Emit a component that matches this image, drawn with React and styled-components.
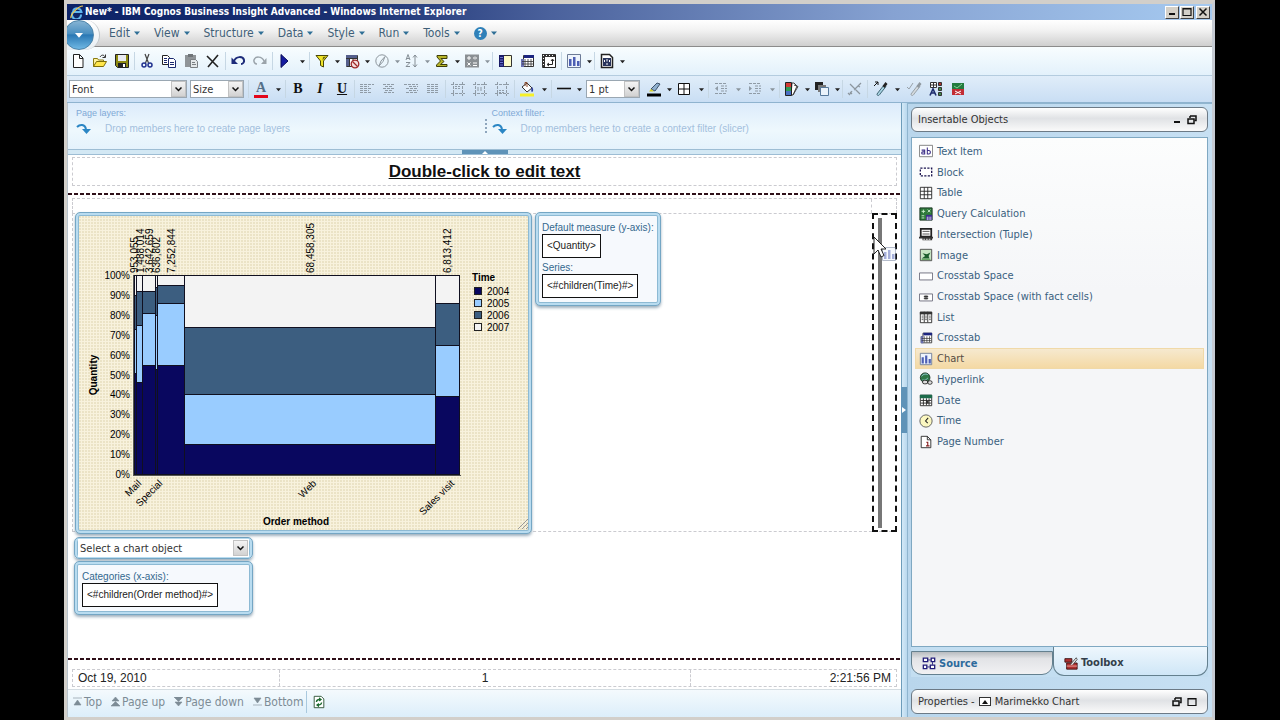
import React from "react";
import styled, { createGlobalStyle, css } from "styled-components";

const ui = `"DejaVu Sans Condensed", "Noto Sans", sans-serif`;
const arial = `"Liberation Sans", Arial, sans-serif`;

const GlobalStyle = createGlobalStyle`
  * {
    box-sizing: border-box;
  }
  body {
    margin: 0;
    background: #000;
    font-family: ${ui};
    font-size: 11px;
  }
  button {
    border: 0;
    padding: 0;
    margin: 0;
    background: none;
    font: inherit;
    color: inherit;
  }
  ul {
    list-style: none;
    margin: 0;
    padding: 0;
  }
  svg {
    display: block;
    flex: none;
  }
`;

/* ---------- icons ---------- */

const Glyph = ({ size = 16, children }) => (
  <svg width={size} height={size} viewBox="0 0 16 16" fill="none" aria-hidden="true">
    {children}
  </svg>
);

const alignLines = (rows) =>
  rows.map(([x, w], i) => (
    <path key={i} d={`M${x} ${3.5 + i * 2}h${w}`} stroke="#8f9ba6" strokeDasharray="3 1" />
  ));

const frameLines = (y) => (
  <>
    <path d="M3.5 1v14M12.5 1v14M1 3.5h14M1 12.5h14" stroke="#8f9ba6" strokeDasharray="3 1" />
    <path d={`M5 ${y}h6M5 ${y + 2}h6`} stroke="#8f9ba6" strokeDasharray="2 1" />
  </>
);

const icons = {
  new: <path d="M3.5 1.5h6l3.5 3.5v9.5h-9.5zM9.5 1.5v4h3.5" fill="#fff" stroke="#222" />,
  open: (
    <>
      <path d="M1.5 13.5v-8h4l1 1.5h5v2" fill="#fff3a0" stroke="#8a7a10" />
      <path d="M1.5 13.5l3-5h10l-3 5z" fill="#ffe64a" stroke="#7d6d08" />
      <path d="M8 4c1.5-2.5 4-2.5 5 0M13.5 1.5v3h-3" stroke="#333" />
    </>
  ),
  save: (
    <>
      <path d="M1.5 1.5h13v13h-11l-2-2z" fill="#8e8b12" stroke="#222" />
      <path d="M4 2h8v6H4z" fill="#e9ebf2" />
      <path d="M4 10h8v4H4z" fill="#222" />
      <path d="M9 11h2v3H9z" fill="#fff" />
    </>
  ),
  cut: (
    <>
      <path d="M6 1l3.5 9M10 1l-3.5 9" stroke="#444" strokeWidth="1.2" />
      <circle cx="5" cy="12" r="2" stroke="#20318f" strokeWidth="1.5" />
      <circle cx="11" cy="12" r="2" stroke="#20318f" strokeWidth="1.5" />
    </>
  ),
  copy: (
    <>
      <path d="M1.5 2.5h5l2 2v7h-7z" fill="#fff" stroke="#222" />
      <path d="M7.5 5.5h5l2 2v7h-7z" fill="#fff" stroke="#1c2a70" />
      <path d="M3 5.5h3M3 7.5h3M3 9.5h3M9 9.5h4M9 11.5h4" stroke="#1c2a70" />
    </>
  ),
  paste: (
    <>
      <path d="M2 2h11v12H2z" fill="#8f9498" />
      <path d="M5 1h5v3H5z" fill="#6f7478" />
      <path d="M7.5 6.5h5l2 2v6h-7z" fill="#e4e8ea" stroke="#7a7f83" />
      <path d="M9 9.5h3M9 11.5h4" stroke="#7a7f83" />
    </>
  ),
  remove: <path d="M2 3l11 11M13 2L3 14" stroke="#222" strokeWidth="1.6" />,
  undo: (
    <>
      <path d="M4 8c2-5 9-5 10-1 .5 2-1 4-3 4" stroke="#1d2b7a" strokeWidth="2" />
      <path d="M1.5 4.5v6.500h6.500z" fill="#1d2b7a" />
    </>
  ),
  redo: (
    <>
      <path d="M12 8C10 3 3 3 2 7c-.5 2 1 4 3 4" stroke="#9aa3aa" strokeWidth="1.5" />
      <path d="M14.5 5v6H9z" fill="#9aa3aa" />
    </>
  ),
  run: <path d="M4 1.5l7 6.5-7 6.5z" fill="#151ba0" stroke="#0a0d58" />,
  filter: (
    <>
      <path d="M2 2.5h12l-4.5 5.5v6l-3-1.500V8z" fill="#f0e428" stroke="#4a4708" />
      <path d="M9 4l3-.5-3.500 4z" fill="#6b6810" />
    </>
  ),
  suppress: (
    <>
      <path d="M2.5 2.5h11v11h-11zM2.5 5.5h11M5.5 2.5v11M9 5v4" fill="#fff" stroke="#333" />
      <path d="M2 2h11v3H2zM2 6h3v7H2z" fill="#555f8c" />
      <circle cx="11" cy="11" r="3.8" fill="#f4dcdc" stroke="#a02828" strokeWidth="1.3" />
      <path d="M8.5 8.5l5 5" stroke="#a02828" strokeWidth="1.3" />
    </>
  ),
  explore: (
    <>
      <circle cx="8" cy="8" r="6.2" stroke="#8e979e" />
      <path d="M11 3.5L7 8l-2 5 4-4.5z" stroke="#8e979e" />
    </>
  ),
  sort: (
    <>
      <path d="M2 7l2-5.5L6 7M2.5 5.5h3M2 9.5h4l-4 4h4" stroke="#858e95" />
      <path d="M11 2v12M9 4.5L11 2l2 2.5M9 11.5l2 2.5 2-2.5" stroke="#858e95" />
    </>
  ),
  sum: <path d="M3 2.5h10v3H7l3 3-3.5 3H13v2H2.5V12L6.500 8 3 4z" fill="#b7b52a" stroke="#3f3e08" />,
  calc: (
    <>
      <path d="M1 1.5h14v13H1z" fill="#8a8f93" />
      <path
        d="M3 5h4M5 3v4M9 5h4M3.5 9.5l3 3M6.5 9.5l-3 3M9 10h4M9 12.5h4M11 3v.5M11 6.5v.5"
        stroke="#fff"
      />
    </>
  ),
  panel: (
    <>
      <path d="M2.5 2.5h12v11h-12z" fill="#fdfbc8" stroke="#333" />
      <path d="M2 2h5v12H2z" fill="#1a1c66" />
      <path d="M3 4.5h3M3 7h3M3 9.5h3M3 12h3" stroke="#6c72d0" />
    </>
  ),
  crosstab: (
    <>
      <path d="M4.5 2.5h10v11h-12v-7h2z" fill="#fff" stroke="#333" />
      <path d="M5 2h10v3H5z" fill="#1c2580" />
      <path d="M2 6h3v8H2z" fill="#6a70b0" />
      <path d="M3 8.5h11M3 11h11M6 6v7M9 6v7M12 6v7" stroke="#333" strokeWidth=".8" />
    </>
  ),
  swap: (
    <>
      <path d="M1.5 1.5h13v13h-13z" fill="#fff" stroke="#222" />
      <path d="M1 1h13v3H1zM1 1h3v13H1z" fill="#333" />
      <path d="M2 2.5h11M2.5 5v8" stroke="#fff" strokeDasharray="1 2" />
      <path d="M11.5 6.5v5h-5M10 8l1.5-2L13 8M8 10l-2 1.5L8 13" stroke="#222" />
    </>
  ),
  chart: (
    <>
      <path d="M1.5 1.5h13v13h-13z" fill="#eef4fc" stroke="#6c7a96" />
      <path d="M3 6h2.5v7H3zM7 4h2.5v9H7zM11 8h2.5v5H11z" fill="#4d5fb4" />
    </>
  ),
  template: (
    <>
      <path d="M2.5 1.5h8l3 3v10h-11z" fill="#fff" stroke="#222" strokeWidth="1.5" />
      <path d="M4 5h8v8H4z" fill="#29345c" />
      <path d="M5.5 7v2M8 6v2.5M8 10v2M10.5 7v2" stroke="#fff" />
    </>
  ),
  fill: (
    <>
      <path d="M3 6l5-4 5 5-5 4z" fill="#fff" stroke="#333" />
      <path d="M6 5V1.5h2V6" stroke="#8d4b2a" />
      <path d="M13 6c2 2 1 5 0 5s-1-3 0-5z" fill="#2a3a9c" />
      <path d="M1 12.5h14v3H1z" fill="#f6f02a" />
    </>
  ),
  line: <path d="M1 7.5h14" stroke="#111" strokeWidth="1.6" />,
  pen: (
    <>
      <path d="M5 8l6-6 3 1-5 7z" fill="#8fb0cf" stroke="#3c526b" />
      <path d="M3 10.500l2-2.500 3 2.500z" fill="#d8d020" />
      <path d="M1 12.5h14v3H1z" fill="#000" />
    </>
  ),
  borders: <path d="M2.5 2.5h11v11h-11zM8 2.5v11M2.5 8h11" fill="#fff" stroke="#111" />,
  outdent: (
    <>
      <path d="M2 2.5h12M8 5h6M8 7.5h6M8 10h6M2 12.5h12" stroke="#8f9ba6" strokeDasharray="3 1" />
      <path d="M5 5L2 7.5 5 10z" fill="#8f9ba6" />
    </>
  ),
  indent: (
    <>
      <path d="M2 2.5h12M8 5h6M8 7.5h6M8 10h6M2 12.5h12" stroke="#8f9ba6" strokeDasharray="3 1" />
      <path d="M2 5l3 2.5L2 10z" fill="#8f9ba6" />
    </>
  ),
  palette: (
    <>
      <path d="M8 2h2l3 3-4 9H7zM10 4l4 1.5-5 8.5" fill="#fff" stroke="#444" />
      <path d="M1.5 1.5h6v13h-6z" fill="#4a70c4" stroke="#222" />
      <path d="M2 2h5v4H2z" fill="#d33a34" />
      <path d="M2 6h5v4H2z" fill="#2f9a56" />
    </>
  ),
  layers: (
    <>
      <path d="M1 1h8v8H1z" fill="#222" />
      <path d="M4 4h8v7H4z" fill="#777" />
      <path d="M6.5 6.5h8v8h-8z" fill="#eaf3fb" stroke="#56789a" />
    </>
  ),
  clear: (
    <path d="M14 2L7 9M3 3l10 10M3 11l2 2M1 12l2 2M11 5l2 1M5 10l-2 3" stroke="#8c969e" strokeWidth="1.2" />
  ),
  pick: (
    <>
      <path d="M2 5l4-4M3 1h3v3" stroke="#111" />
      <path d="M5 13l7-9 2 1.5L8 13c-1 2-3 2-3 0z" fill="#a8d4e4" stroke="#3f6472" />
      <path d="M10.5 5l3-4 2 2-3 4z" fill="#222" />
    </>
  ),
  apply: (
    <>
      <path d="M1 6l2 2 4-6" stroke="#98a1a8" />
      <path d="M5 13l7-9 2 1.5L8 13c-1 2-3 2-3 0z" fill="#d4dade" stroke="#98a1a8" />
      <path d="M10.5 5l3-4 2 2-3 4z" fill="#8f989f" />
    </>
  ),
  styles: (
    <>
      <path d="M2.5 1.5h6v5h-6zM5.5 1.5v5M2.5 4h6" fill="#fff" stroke="#333" />
      <path d="M10.5 1.5h3v3h-3z" fill="#b0302c" stroke="#333" />
      <path d="M10.5 6.5h3v3h-3zM10.5 11.5h3v3h-3z" fill="#3f8c4a" stroke="#333" />
      <path d="M2 14.5L5 8l3 6.5M3 12h4" stroke="#1e2d6e" strokeWidth="1.6" />
    </>
  ),
  conditional: (
    <>
      <path d="M2 2h12v6H2z" fill="#237a3e" />
      <path d="M2 8h12v6H2z" fill="#c22c34" />
      <path d="M4 5l3 2 5-4" stroke="#7fd492" />
      <path d="M5 10l6 3M11 10l-6 3" stroke="#fff" />
    </>
  ),
  alignLeft: alignLines([[1, 14], [1, 9], [1, 12], [1, 9], [1, 12]]),
  alignCenter: alignLines([[2, 12], [4, 8], [2, 12], [4, 8], [3, 10]]),
  alignRight: alignLines([[1, 14], [6, 9], [3, 12], [6, 9], [3, 12]]),
  justify: alignLines([[2, 12], [2, 12], [2, 12], [2, 12], [2, 12]]),
  top: frameLines(5.5),
  middle: frameLines(7),
  bottom: frameLines(9.5),

  text: (
    <>
      <path d="M.5 1.5h15v13H.5z" fill="#fff" stroke="#777" />
      <path
        d="M3 7h3.500v4.500H4.300a1.200 1.200 0 010-2.500H6M9.500 4v7.500h1.700c2.400 0 2.400-4 0-4H9.500"
        stroke="#3a2c86"
        strokeWidth="1.2"
      />
    </>
  ),
  block: (
    <path d="M1.5 3.5h13v9h-13z" fill="#fff" stroke="#19124e" strokeWidth="1.5" strokeDasharray="2.5 1.5" />
  ),
  table: (
    <path d="M1.500 1.500h13v13h-13zM6 1.500v13M10 1.500v13M1.500 6h13M1.500 10h13" fill="#fff" stroke="#222" />
  ),
  query: (
    <>
      <path d="M1 1h14v14H1z" fill="#2f7a3c" stroke="#16301b" />
      <path d="M3 5h4M5 3v4M10 3l3 3M13 3l-3 3M3 10h3M3 12.5h3" stroke="#d4f2d4" />
      <path d="M8 9h7v6H8z" fill="#3c2b8e" />
      <path d="M9.5 11v4M11.500 11v4M13.500 11v4" stroke="#fff" strokeWidth=".8" />
    </>
  ),
  tuple: (
    <>
      <path d="M2 2h12v9H2z" fill="#fff" stroke="#222" strokeWidth="2" />
      <path d="M4 5h8M4 8h8" stroke="#444" />
      <path d="M0 11h16v2H0zM4 13h11v2H4z" fill="#333" />
      <path d="M5 14h9" stroke="#fff" strokeDasharray="2 1" />
    </>
  ),
  image: (
    <>
      <path d="M1.5 1.5h13v13h-13z" fill="#c8e4c4" stroke="#444" />
      <path d="M3 12l4-3-3-3 5 1 4-2-2 4 1 3z" fill="#1c5c2c" />
      <path d="M3 13h10" stroke="#4f9a4a" />
    </>
  ),
  space: <path d="M.5 4.5h15v8H.5z" fill="#fff" stroke="#667" />,
  spaceFact: (
    <>
      <path d="M.5 4.5h15v8H.5z" fill="#fff" stroke="#667" />
      <path d="M7 6v5M9 6v5M5.500 7.500h5M5.500 9.500h5" stroke="#222" />
    </>
  ),
  list: (
    <>
      <path d="M1.5 2.5h13v12h-13zM6 2v12M10 2v12" fill="#fff" stroke="#222" />
      <path d="M1 2h14v3H1z" fill="#333" />
      <path d="M3 7h2M3 9h2M3 11h2M7 7h2M7 9h2M7 11h2M11.500 7h2M11.500 9h2M11.500 11h2" stroke="#555" />
    </>
  ),
  hyperlink: (
    <>
      <circle cx="7" cy="6.5" r="5.5" fill="#2f7848" stroke="#1c3426" />
      <path d="M3 5c2-3 5-3 7-2M4 9c2 1 4 0 6-2" stroke="#a4d8e8" />
      <path
        d="M4 11.5a2 2 0 012-2h2a2 2 0 010 4H6a2 2 0 01-2-2zM10 12a2 2 0 012-2h1a2 2 0 010 4h-1a2 2 0 01-2-2z"
        fill="#ddd"
        stroke="#222"
      />
    </>
  ),
  date: (
    <>
      <path d="M1.5 2.5h13v12h-13zM5 6v8M8.5 6v8M11.5 6v8M2 8.5h12M2 11.5h12" fill="#fff" stroke="#222" />
      <path d="M1 2h14v4H1z" fill="#1c6a4a" />
      <path d="M8 9h3v3H8z" fill="#333" />
    </>
  ),
  time: (
    <>
      <circle cx="8" cy="8" r="7" fill="#fbf7c0" stroke="#555" />
      <path d="M10.5 4.5L7.500 8l2.500 2.500" stroke="#222" strokeWidth="1.2" />
    </>
  ),
  pageNumber: (
    <>
      <path d="M2.500 1.500h7l4 4v9h-11zM9.500 1.500v4h4" fill="#fff" stroke="#222" />
      <path d="M8.500 8.500h1.500v4M8 12.500h4" stroke="#8a2424" strokeWidth="1.3" />
    </>
  ),
  source: (
    <>
      <path
        d="M1.500 2.500h5v4h-5zM10.500 2.500h4v4h-4zM1.500 10.500h4v4h-4zM9.500 10.500h5v4h-5z"
        fill="#fff"
        stroke="#221c7a"
        strokeWidth="1.5"
      />
      <path d="M7 4.500h3M6 12.500h3M12 7v3" stroke="#221c7a" />
    </>
  ),
  toolbox: (
    <>
      <path d="M1 3h8v4H1zM3 8h12v7H3z" fill="#b03030" stroke="#3c1010" />
      <path d="M7 10l7-8 1 2-5 6" fill="#eee" stroke="#444" />
      <path d="M3 11.500h12" stroke="#f2b0a8" />
    </>
  ),
  refresh: (
    <>
      <path d="M2.500 1.500h8l3 3v10h-11z" fill="#fff" stroke="#234a2c" />
      <path d="M5 8a3 3 0 015-2M11 8.500a3 3 0 01-5 2" stroke="#1d6a30" strokeWidth="1.6" />
      <path d="M8 2.500v5l3.500-2.500zM8 14V9l-3.500 2.500z" fill="#1d6a30" />
    </>
  ),
};

const CaretDown = ({ color = "#222", size = 5 }) => (
  <svg width={size} height={size} viewBox="0 0 6 6" aria-hidden="true">
    <path d="M0 1.5h6L3 5z" fill={color} />
  </svg>
);

const RestoreIcon = () => (
  <svg width="10" height="10" viewBox="0 0 10 10" fill="none" aria-hidden="true">
    <path d="M3 1h6v4.5H7.5M3 1v2" stroke="#111" strokeWidth="1.5" />
    <path d="M1 4h6v4.5H1z" stroke="#111" strokeWidth="1.5" />
  </svg>
);

const MinimizeIcon = () => (
  <svg width="10" height="10" viewBox="0 0 10 10" aria-hidden="true">
    <path d="M2 6h6v2H2z" fill="#111" />
  </svg>
);

const MaximizeIcon = () => (
  <svg width="10" height="10" viewBox="0 0 10 10" fill="none" aria-hidden="true">
    <path d="M1 1.5h8v7H1zM1 2h8" stroke="#111" strokeWidth="1.2" />
  </svg>
);

const CloseIcon = () => (
  <svg width="10" height="10" viewBox="0 0 10 10" aria-hidden="true">
    <path d="M1.5 1.5l7 7M8.5 1.5l-7 7" stroke="#111" strokeWidth="1.5" />
  </svg>
);

/* ---------- window chrome ---------- */

const Screen = styled.div`
  min-height: 100vh;
  padding: 0 65px 0 64px;
  display: flex;
`;

const Window = styled.div`
  flex: 1;
  min-width: 0;
  display: flex;
  flex-direction: column;
  border: solid #d2cfca;
  border-width: 4px 3px 3px 3px;
  border-right-color: #c6cbd3;
  background: #c3def1;
`;

const TitleBar = styled.header`
  height: 16px;
  padding: 0 2px 0 3px;
  display: flex;
  align-items: center;
  gap: 1px;
  background: linear-gradient(90deg, #0d2367 0%, #1b3172 25%, #4a619c 42%, #86a2d2 72%, #a6caf0 100%);
  color: #fff;
`;

const WindowTitle = styled.h1`
  flex: 1;
  margin: 0;
  font: bold 10px/16px ${ui};
  white-space: nowrap;
`;

const WindowButton = styled.button`
  width: 14px;
  height: 13px;
  display: grid;
  place-items: center;
  background: #d4d0c8;
  border: 1px solid;
  border-color: #fff #404040 #404040 #fff;
  margin-left: ${({ $apart }) => ($apart ? 1 : 0)}px;
`;

const MenuBar = styled.nav`
  position: relative;
  height: 27px;
  padding-left: 42px;
  display: flex;
  align-items: center;
  gap: 14px;
  background: linear-gradient(#fff, #f2f2f2 40%, #cfcfcf);
  border-bottom: 1px solid #8b8b8b;
`;

const AppArc = styled.div`
  position: absolute;
  left: 0;
  top: 0;
  width: 33px;
  height: 30px;
  overflow: hidden;
  border-radius: 0 16px 16px 0;
  background: linear-gradient(#fff, #e8eef2);
  border-right: 1px solid #c0c6ca;
`;

const AppButton = styled.button`
  width: 30px;
  height: 30px;
  margin-left: -3px;
  border-radius: 50%;
  display: grid;
  place-items: center;
  background: linear-gradient(#86b4d4, #4a8fc0 45%, #2a78b4 50%, #6fb8e4);
  border: 1px solid #4c83a8;
`;

const MenuButton = styled.button`
  display: flex;
  align-items: center;
  gap: 4px;
  color: #3f5f78;
  font-size: 12px;
`;

const HelpBadge = styled.span`
  width: 13px;
  height: 13px;
  border-radius: 50%;
  display: grid;
  place-items: center;
  background: #2f80b8;
  color: #fff;
  font-size: 10px;
  font-weight: bold;
`;

const ToolBar = styled.div`
  height: ${({ $dense }) => ($dense ? 27 : 29)}px;
  display: flex;
  align-items: center;
  background: ${({ $dense }) =>
    $dense ? "linear-gradient(#e0edf9, #c9def4)" : "linear-gradient(#f8fdff, #e3f1fb)"};
  border-bottom: 1px solid ${({ $dense }) => ($dense ? "#8fb3cf" : "#b4ccdf")};
`;

const Separator = styled.span`
  width: 1px;
  height: 18px;
  margin: 0 1px;
  background: #c6d7e4;
`;

const ToolButton = styled.button`
  height: 22px;
  display: flex;
  align-items: center;
`;

const ToolFace = styled.span`
  width: 22px;
  height: 20px;
  display: grid;
  place-items: center;
  font-family: "Liberation Serif", serif;
  font-size: 14px;
  font-weight: bold;
  line-height: 14px;
  color: #111;
  ${({ $face }) => $face === "I" && "font-style: italic;"}
  ${({ $face }) => $face === "U" && "text-decoration: underline;"}
  ${({ $face }) =>
    $face === "A" &&
    css`
      place-content: center;
      color: #55708a;
      &::after {
        content: "";
        width: 14px;
        height: 3px;
        background: #e3061b;
      }
    `}
`;

const ToolCaret = styled.span`
  width: ${({ $wide }) => ($wide ? 12 : 8)}px;
  display: grid;
  place-items: center;
`;

const SelectBox = styled.label`
  position: relative;
  display: flex;
  width: ${({ $width }) => $width};
  margin: ${({ $margin }) => $margin || 0};

  select {
    appearance: none;
    flex: 1;
    min-width: 0;
    height: 18px;
    padding: 0 18px 0 2px;
    border: ${({ $plain }) => ($plain ? "0" : "1px solid #9aa7b2")};
    border-radius: 0;
    background: #fff;
    color: #333;
    font: 11px ${ui};
  }
`;

const SelectArrow = styled.span`
  position: absolute;
  right: 1px;
  top: 1px;
  width: 15px;
  height: 16px;
  display: grid;
  place-items: center;
  pointer-events: none;
  background: linear-gradient(#f4f4f4, #d2d2d2);
  border: 1px solid #c2c2c2;
`;

const Select = ({ label, children, ...box }) => (
  <SelectBox {...box}>
    <select aria-label={label}>
      <option>{children}</option>
    </select>
    <SelectArrow>
      <svg width="7" height="5" viewBox="0 0 7 5" fill="none" aria-hidden="true">
        <path d="M.5.5l3 3 3-3" stroke="#111" strokeWidth="1.5" />
      </svg>
    </SelectArrow>
  </SelectBox>
);

const Tool = ({ name, face, caret, off }) => (
  <ToolButton type="button" aria-label={name}>
    <ToolFace $face={face}>{face || <Glyph>{icons[name]}</Glyph>}</ToolFace>
    {caret && (
      <ToolCaret $wide={caret === "wide"}>
        <CaretDown color={off ? "#8a949c" : "#222"} />
      </ToolCaret>
    )}
  </ToolButton>
);

/* ---------- work area ---------- */

const Workspace = styled.main`
  flex: 1;
  display: flex;
`;

const Editor = styled.section`
  flex: 1;
  min-width: 0;
  display: flex;
  flex-direction: column;
  background: #fff;
  border-left: 1px solid #b9c4cd;
`;

const DropZones = styled.div`
  height: 46px;
  display: grid;
  grid-template-columns: 1fr 1fr;
  background: linear-gradient(#dcebfb, #eef8fd 60%, #e4f2fc);
`;

const DropZone = styled.div`
  padding: 5px 0 0 8px;
  color: #7fa9d6;
  font: 9px/10px ${arial};

  & + & {
    padding-left: 7px;
    background: repeating-linear-gradient(#8ea6bd 0 2px, transparent 2px 4px) 0 16px / 2px 14px no-repeat;
  }
`;

const DropHint = styled.p`
  margin: 1px 0 0;
  display: flex;
  align-items: center;
  gap: 14px;
  color: #a3c0dd;
  font-size: 10px;
  line-height: 20px;
`;

const Collapser = styled.div`
  height: 6px;
  display: flex;
  justify-content: center;
  background: #d3e8f4;
  border: solid #9dbdd4;
  border-width: 1px 0;
`;

const CollapseHandle = styled.button`
  width: 46px;
  display: grid;
  place-items: center;
  background: #5f93b8;
`;

const dashed = "1px dashed #cbcbd0";

const PageTitle = styled.h2`
  height: 29px;
  margin: 2px 4px 7px;
  border: ${dashed};
  text-align: center;
  font: bold 17px/27px ${arial};
  text-decoration: underline;
  color: #111;
`;

const SectionRule = styled.div`
  height: 2px;
  background: repeating-linear-gradient(90deg, #2e0f18 0 4px, #fff 4px 6px);
`;

const PageBody = styled.div`
  flex: 1;
  padding: 3px 4px 0;
`;

const SlotRow = styled.div`
  height: 15px;
  display: grid;
  grid-template-columns: 1fr 25px;
  border: ${dashed};
  border-bottom: 0;

  span + span {
    border-left: ${dashed};
  }
`;

const ContentRow = styled.div`
  display: flex;
  align-items: flex-start;
  border: ${dashed};
  border-right: 0;
`;

const Spacer = styled.div`
  flex: 1;
`;

const DropColumn = styled.div`
  position: relative;
  align-self: stretch;
  width: 25px;
  margin: -1px 0;
  padding: 3px 3px 2px 4px;
  border: 2px dashed #111;

  &::before {
    content: "";
    display: block;
    width: 4px;
    height: 100%;
    background: #777;
  }
`;

const DragPointer = styled.div`
  position: absolute;
  left: -1px;
  top: 20px;
`;

const card = css`
  border: 1px solid #74a6c4;
  border-radius: 5px;
  box-shadow: inset 0 0 0 2px #b9dcf0, inset 0 0 0 3px #8dbad4, 0 2px 3px rgba(40, 80, 110, 0.45);
`;

const ChartCard = styled.div`
  ${card}
  width: 457px;
  margin: -2px 3px -3px 2px;
  padding: 2px;
  background: radial-gradient(circle at 1px 1px, #ebe3c6 1px, transparent 1px) 0 0 / 3px 3px #f8f2dd;
`;

const FieldCard = styled.div`
  ${card}
  width: ${({ $width }) => $width}px;
  margin-top: ${({ $top }) => $top}px;
  padding: 9px 0 7px ${({ $inset }) => $inset}px;
  background: #f6f9fd;
  font: 10px/12px ${arial};
  color: #33688e;
`;

const Field = styled.div`
  & + & {
    margin-top: 4px;
  }
`;

const FieldValue = styled.div`
  width: fit-content;
  height: 24px;
  padding: 0 4px;
  border: 1px solid #111;
  background: #fff;
  color: #222;
  line-height: 22px;
`;

const ControlStack = styled.div`
  width: 179px;
  margin: 5px 0 0 2px;
`;

const SelectCard = styled.div`
  ${card}
  height: 22px;
  padding: 1px 3px;
`;

const PageFooter = styled.div`
  height: 18px;
  margin: 9px 4px 2px;
  display: grid;
  grid-template-columns: 1fr 2fr 1fr;
  border: ${dashed};
  font: 12px/16px ${arial};
  color: #222;
`;

const FooterCell = styled.div`
  padding: 0 5px;
  text-align: ${({ $align }) => $align};

  & + & {
    border-left: ${dashed};
  }
`;

const PageNav = styled.nav`
  height: 28px;
  padding: 0 0 4px 5px;
  display: flex;
  align-items: center;
  gap: 9px;
  background: linear-gradient(#f4fafd, #dceefa);
  border-top: 1px solid #d5dde2;
  color: #7d8c96;
  font-size: 12px;
`;

const NavButton = styled.button`
  display: flex;
  align-items: center;
  gap: 2px;
`;

const NavEnd = styled.div`
  margin-left: -6px;
  padding-left: 5px;
  border-left: 1px solid #a9c9de;
`;

const Splitter = styled.div`
  width: 6px;
  display: flex;
  flex-direction: column;
  justify-content: center;
  background: linear-gradient(90deg, #6d9cba 1px, #d4e9f7 1px, #b9d8ee);
`;

const SplitHandle = styled.button`
  height: 46px;
  background: #5f93b8;
`;

/* ---------- right panel ---------- */

const SidePanel = styled.aside`
  width: 305px;
  padding: 3px 4px 3px 3px;
  display: flex;
  flex-direction: column;
  background: linear-gradient(90deg, #b9d6ec, #c7e0f3);
  border-left: 1px solid #8fb5cf;
  border-top: 1px solid #8fb5cf;
`;

const PanelHeader = styled.div`
  height: 25px;
  padding: 0 10px 0 6px;
  display: flex;
  align-items: center;
  gap: 5px;
  border: 1px solid #6c7a86;
  border-radius: 6px;
  background: linear-gradient(#fff, #e0e2e5 45%, #fafafa);
  color: #333;
`;

const PanelTitle = styled.h2`
  flex: 1;
  margin: 0;
  display: flex;
  align-items: center;
  gap: 4px;
  font: inherit;
  white-space: nowrap;
`;

const ObjectPane = styled.div`
  flex: 1;
  margin-top: 5px;
  padding: 3px 3px 0;
  background: linear-gradient(#fcfdfd, #f5f6f8 30%, #f5f6f8);
  border: 1px solid #7fa8c2;
`;

const ObjectList = styled.ul`
  height: 311px;
  display: flex;
  flex-direction: column;
`;

const ObjectItem = styled.li`
  flex: 1;
  padding-left: 3px;
  display: flex;
  align-items: center;
  border: 1px solid transparent;
  color: #3a617f;
  ${({ $selected }) =>
    $selected &&
    css`
      border-color: #f0d9a8;
      background: linear-gradient(#f6e9cf, #f4d9a4);
      color: #554c44;
    `}

  button {
    display: flex;
    align-items: center;
    gap: 4px;
  }
`;

const Tabs = styled.div`
  height: 30px;
  display: grid;
  grid-template-columns: 142px 1fr;
  padding-bottom: 1px;
  background: #c3def1;
`;

const Tab = styled.button`
  display: flex;
  align-items: center;
  gap: 3px;
  padding-left: 10px;
  border: 1px solid #64808f;
  border-radius: 0 0 11px 11px;
  font-weight: bold;
  color: #2c6a9c;
  ${({ $active }) =>
    $active
      ? css`
          border-top: 0;
          padding-top: 3px;
          background: linear-gradient(#eef7fd, #cfe6f7);
          color: #333f4a;
        `
      : css`
          margin-top: 4px;
          margin-bottom: 1px;
          background: linear-gradient(#b8bcc0, #e2e3e6 30%, #f1f1f3);
        `}
`;

const PropertiesHeader = styled(PanelHeader)`
  margin-top: 12px;
`;

const TypeBox = styled.span`
  width: 12px;
  height: 9px;
  display: grid;
  place-items: center;
  border: 1px solid #333;
  background: #fff;
`;

/* ---------- chart ---------- */

const fills = ["#09075f", "#99ccff", "#3c5e80", "#f3f3f3"];
const years = ["2004", "2005", "2006", "2007"];

// x positions in plot pixels, stops are cumulative percents from the bottom
const columns = [
  { x: 0, w: 2, stops: [51, 73, 90], total: "953,055", labelX: 4 },
  { x: 2, w: 6, stops: [46, 75, 92], total: "1,488,014", labelX: 10 },
  { x: 8, w: 13, stops: [55, 81, 92], total: "3,642,659", labelX: 19 },
  { x: 21, w: 2, stops: [53, 80, 94], total: "636,802", labelX: 26 },
  { x: 23, w: 27, stops: [55, 86, 95], total: "7,252,844", labelX: 41 },
  { x: 50, w: 251, stops: [15, 40, 74], total: "68,458,305", labelX: 180 },
  { x: 301, w: 24, stops: [39, 65, 86], total: "6,813,412", labelX: 317 },
];

const methods = [
  { name: "Mail", x: 64 },
  { name: "Special", x: 85 },
  { name: "Web", x: 239 },
  { name: "Sales visit", x: 377 },
];

const PLOT = { x: 56, y: 60, w: 325, h: 199 };
const yAt = (percent) => PLOT.y + PLOT.h - (percent / 100) * PLOT.h;

const ChartSvg = styled.svg`
  font-family: ${arial};
  font-size: 10px;

  .bold {
    font-weight: bold;
  }
`;

const MarimekkoChart = () => (
  <ChartSvg width="451" height="316" viewBox="0 0 451 316" role="img" aria-label="Quantity by order method">
    {Array.from({ length: 11 }, (_, i) => (
      <text key={i} x="52" y={Math.round(yAt(i * 10)) + 4} textAnchor="end">
        {i * 10}%
      </text>
    ))}
    <g shapeRendering="crispEdges">
      {columns.map((col) => {
        const edges = [0, ...col.stops, 100];
        return fills.map((fill, i) => (
          <rect
            key={col.total + fill}
            x={PLOT.x + col.x + 0.5}
            y={yAt(edges[i + 1]) + 0.5}
            width={col.w}
            height={yAt(edges[i]) - yAt(edges[i + 1])}
            fill={fill}
            stroke="#101020"
          />
        ));
      })}
      <path d="M55.5 60v200h327" fill="none" stroke="#555" />
    </g>
    {columns.map((col) => (
      <text key={col.total} transform={`translate(${PLOT.x + col.labelX} 58) rotate(-90)`}>
        {col.total}
      </text>
    ))}
    {methods.map((m) => (
      <text key={m.name} transform={`translate(${m.x} 269) rotate(-45)`} textAnchor="end">
        {m.name}
      </text>
    ))}
    <text className="bold" transform="translate(19 160) rotate(-90)" textAnchor="middle">
      Quantity
    </text>
    <text className="bold" x="218" y="310" textAnchor="middle">
      Order method
    </text>
    <text className="bold" x="394" y="66">
      Time
    </text>
    {years.map((year, i) => (
      <g key={year}>
        <rect x="396.5" y={72.5 + i * 12} width="7" height="7" fill={fills[i]} stroke="#222" />
        <text x="409" y={80 + i * 12}>
          {year}
        </text>
      </g>
    ))}
    <path d="M440 314l10-10M444 314l6-6M448 314l2-2" stroke="#999" />
  </ChartSvg>
);

/* ---------- data ---------- */

const menus = ["Edit", "View", "Structure", "Data", "Style", "Run", "Tools"];

const standardTools = [
  ["new"], ["open"], ["save"], null,
  ["cut"], ["copy"], ["paste"], ["remove"], null,
  ["undo"], ["redo"], null,
  ["run", "wide"], null,
  ["filter", "on"], ["suppress", "on"], ["explore", "on", true], ["sort", "on", true], ["sum", "on"], ["calc", "on", true], null,
  ["panel"], ["crosstab"], ["swap"], null,
  ["chart", "on"], null,
  ["template", "on"],
];

const textTools = [
  null, ["alignLeft"], ["alignCenter"], ["alignRight"], ["justify"],
  null, ["top"], ["middle"], ["bottom"],
  null, ["fill", "wide"],
  null, ["line", "on"],
];

const boxTools = [
  ["pen", "on"], ["borders", "wide"], null,
  ["outdent", "wide", true], ["indent", "wide", true], null,
  ["palette", "on"], ["layers", "on"], null,
  ["clear"], null,
  ["pick", "wide"], ["apply"], ["styles"], ["conditional"],
];

const objects = [
  ["text", "Text Item"],
  ["block", "Block"],
  ["table", "Table"],
  ["query", "Query Calculation"],
  ["tuple", "Intersection (Tuple)"],
  ["image", "Image"],
  ["space", "Crosstab Space"],
  ["spaceFact", "Crosstab Space (with fact cells)"],
  ["list", "List"],
  ["crosstab", "Crosstab"],
  ["chart", "Chart"],
  ["hyperlink", "Hyperlink"],
  ["date", "Date"],
  ["time", "Time"],
  ["pageNumber", "Page Number"],
];

const pageLinks = [
  ["Top", "M0 1h9M1 8h7L4.5 3z"],
  ["Page up", "M1 4h7L4.5 0zM0 9h9L4.5 4.5z"],
  ["Page down", "M0 0h9L4.5 4.5zM1 5h7L4.5 9z"],
  ["Bottom", "M1 1h7L4.5 6zM0 8h9"],
];

const ToolGroup = ({ items }) =>
  items.map((item, i) =>
    item ? <Tool key={i} name={item[0]} caret={item[1]} off={item[2]} /> : <Separator key={i} />
  );

const DropArrow = () => (
  <svg width="15" height="12" viewBox="0 0 15 12" fill="none" aria-hidden="true">
    <path d="M1 4c3-3 8-3 9 2" stroke="#2b86c4" strokeWidth="2" />
    <path d="M6 6h9l-4.5 5z" fill="#2b86c4" />
  </svg>
);

const App = () => (
  <Screen>
    <GlobalStyle />
    <Window>
      <TitleBar>
        <svg width="14" height="14" viewBox="0 0 14 14" fill="none" aria-hidden="true">
          <path d="M11 9.5A4.5 4.5 0 113 7h8.5A4.5 4.5 0 003 6" stroke="#5fb4ee" strokeWidth="2" />
          <path d="M1 13C0 10 8 1 13 1" stroke="#f0c850" strokeWidth="1.2" />
        </svg>
        <WindowTitle>New* - IBM Cognos Business Insight Advanced - Windows Internet Explorer</WindowTitle>
        <WindowButton type="button" aria-label="Minimize">
          <MinimizeIcon />
        </WindowButton>
        <WindowButton type="button" aria-label="Maximize">
          <MaximizeIcon />
        </WindowButton>
        <WindowButton type="button" aria-label="Close" $apart>
          <CloseIcon />
        </WindowButton>
      </TitleBar>

      <MenuBar>
        {menus.map((menu) => (
          <MenuButton key={menu} type="button">
            {menu}
            <CaretDown color="#2f6f96" size={6} />
          </MenuButton>
        ))}
        <MenuButton type="button" aria-label="Help">
          <HelpBadge>?</HelpBadge>
          <CaretDown color="#2f6f96" size={6} />
        </MenuButton>
        <AppArc>
          <AppButton type="button" aria-label="Application menu">
            <CaretDown color="#fff" size={8} />
          </AppButton>
        </AppArc>
      </MenuBar>

      <ToolBar>
        <ToolGroup items={standardTools} />
      </ToolBar>
      <ToolBar $dense>
        <Select label="Font" $width="118px" $margin="0 3px 0 2px">
          Font
        </Select>
        <Select label="Size" $width="54px" $margin="0 3px 0 0">
          Size
        </Select>
        <Separator />
        <Tool name="Font color" face="A" caret="wide" />
        <Separator />
        <Tool name="Bold" face="B" />
        <Tool name="Italic" face="I" />
        <Tool name="Underline" face="U" />
        <ToolGroup items={textTools} />
        <Select label="Line width" $width="54px" $margin="0 3px">
          1 pt
        </Select>
        <ToolGroup items={boxTools} />
      </ToolBar>

      <Workspace>
        <Editor>
          <DropZones>
            <DropZone>
              Page layers:
              <DropHint>
                <DropArrow />
                Drop members here to create page layers
              </DropHint>
            </DropZone>
            <DropZone>
              Context filter:
              <DropHint>
                <DropArrow />
                Drop members here to create a context filter (slicer)
              </DropHint>
            </DropZone>
          </DropZones>
          <Collapser>
            <CollapseHandle type="button" aria-label="Collapse">
              <svg width="6" height="3" viewBox="0 0 6 3" aria-hidden="true">
                <path d="M0 3h6L3 0z" fill="#fff" />
              </svg>
            </CollapseHandle>
          </Collapser>

          <PageTitle>Double-click to edit text</PageTitle>
          <SectionRule />
          <PageBody>
            <SlotRow>
              <span />
              <span />
            </SlotRow>
            <ContentRow>
              <ChartCard>
                <MarimekkoChart />
              </ChartCard>
              <FieldCard $width={126} $top={-2} $inset={6}>
                <Field>
                  Default measure (y-axis):
                  <FieldValue>&lt;Quantity&gt;</FieldValue>
                </Field>
                <Field>
                  Series:
                  <FieldValue>&lt;#children(Time)#&gt;</FieldValue>
                </Field>
              </FieldCard>
              <Spacer />
              <DropColumn>
                <DragPointer>
                  <svg width="24" height="28" viewBox="0 0 24 28" fill="none" aria-hidden="true">
                    <g opacity=".5" transform="translate(8 11)">
                      {icons.chart}
                    </g>
                    <path d="M1 2v17l4-4 3 7 3-1.5-3-6.5h5z" fill="#fff" stroke="#222" />
                  </svg>
                </DragPointer>
              </DropColumn>
            </ContentRow>
            <ControlStack>
              <SelectCard>
                <Select label="Chart object" $width="100%" $plain>
                  Select a chart object
                </Select>
              </SelectCard>
              <FieldCard $width={179} $top={2} $inset={7}>
                <Field>
                  Categories (x-axis):
                  <FieldValue>&lt;#children(Order method)#&gt;</FieldValue>
                </Field>
              </FieldCard>
            </ControlStack>
          </PageBody>
          <SectionRule />
          <PageFooter>
            <FooterCell $align="left">Oct 19, 2010</FooterCell>
            <FooterCell $align="center">1</FooterCell>
            <FooterCell $align="right">2:21:56 PM</FooterCell>
          </PageFooter>
          <PageNav>
            {pageLinks.map(([name, d]) => (
              <NavButton key={name} type="button">
                <svg width="9" height="10" viewBox="0 0 9 10" aria-hidden="true">
                  <path d={d} fill="#7d8c96" stroke="#7d8c96" strokeWidth=".6" />
                </svg>
                {name}
              </NavButton>
            ))}
            <NavEnd>
              <ToolButton type="button" aria-label="Refresh">
                <Glyph size={14}>{icons.refresh}</Glyph>
              </ToolButton>
            </NavEnd>
          </PageNav>
        </Editor>

        <Splitter>
          <SplitHandle type="button" aria-label="Collapse panel">
            <svg width="6" height="8" viewBox="0 0 6 8" aria-hidden="true">
              <path d="M1 1l4 3-4 3z" fill="#fff" />
            </svg>
          </SplitHandle>
        </Splitter>

        <SidePanel>
          <PanelHeader>
            <PanelTitle>Insertable Objects</PanelTitle>
            <button type="button" aria-label="Minimize panel">
              <MinimizeIcon />
            </button>
            <button type="button" aria-label="Restore panel">
              <RestoreIcon />
            </button>
          </PanelHeader>
          <ObjectPane>
            <ObjectList>
              {objects.map(([icon, name]) => (
                <ObjectItem key={name} $selected={name === "Chart"}>
                  <button type="button">
                    <Glyph size={14}>{icons[icon]}</Glyph>
                    {name}
                  </button>
                </ObjectItem>
              ))}
            </ObjectList>
          </ObjectPane>
          <Tabs>
            <Tab type="button">
              <Glyph size={14}>{icons.source}</Glyph>
              Source
            </Tab>
            <Tab type="button" $active>
              <Glyph size={14}>{icons.toolbox}</Glyph>
              Toolbox
            </Tab>
          </Tabs>
          <PropertiesHeader>
            <PanelTitle>
              Properties -
              <TypeBox>
                <svg width="6" height="4" viewBox="0 0 6 4" aria-hidden="true">
                  <path d="M0 4h6L3 0z" fill="#111" />
                </svg>
              </TypeBox>
              Marimekko Chart
            </PanelTitle>
            <button type="button" aria-label="Restore properties">
              <RestoreIcon />
            </button>
            <button type="button" aria-label="Maximize properties">
              <MaximizeIcon />
            </button>
          </PropertiesHeader>
        </SidePanel>
      </Workspace>
    </Window>
  </Screen>
);

export default App;
